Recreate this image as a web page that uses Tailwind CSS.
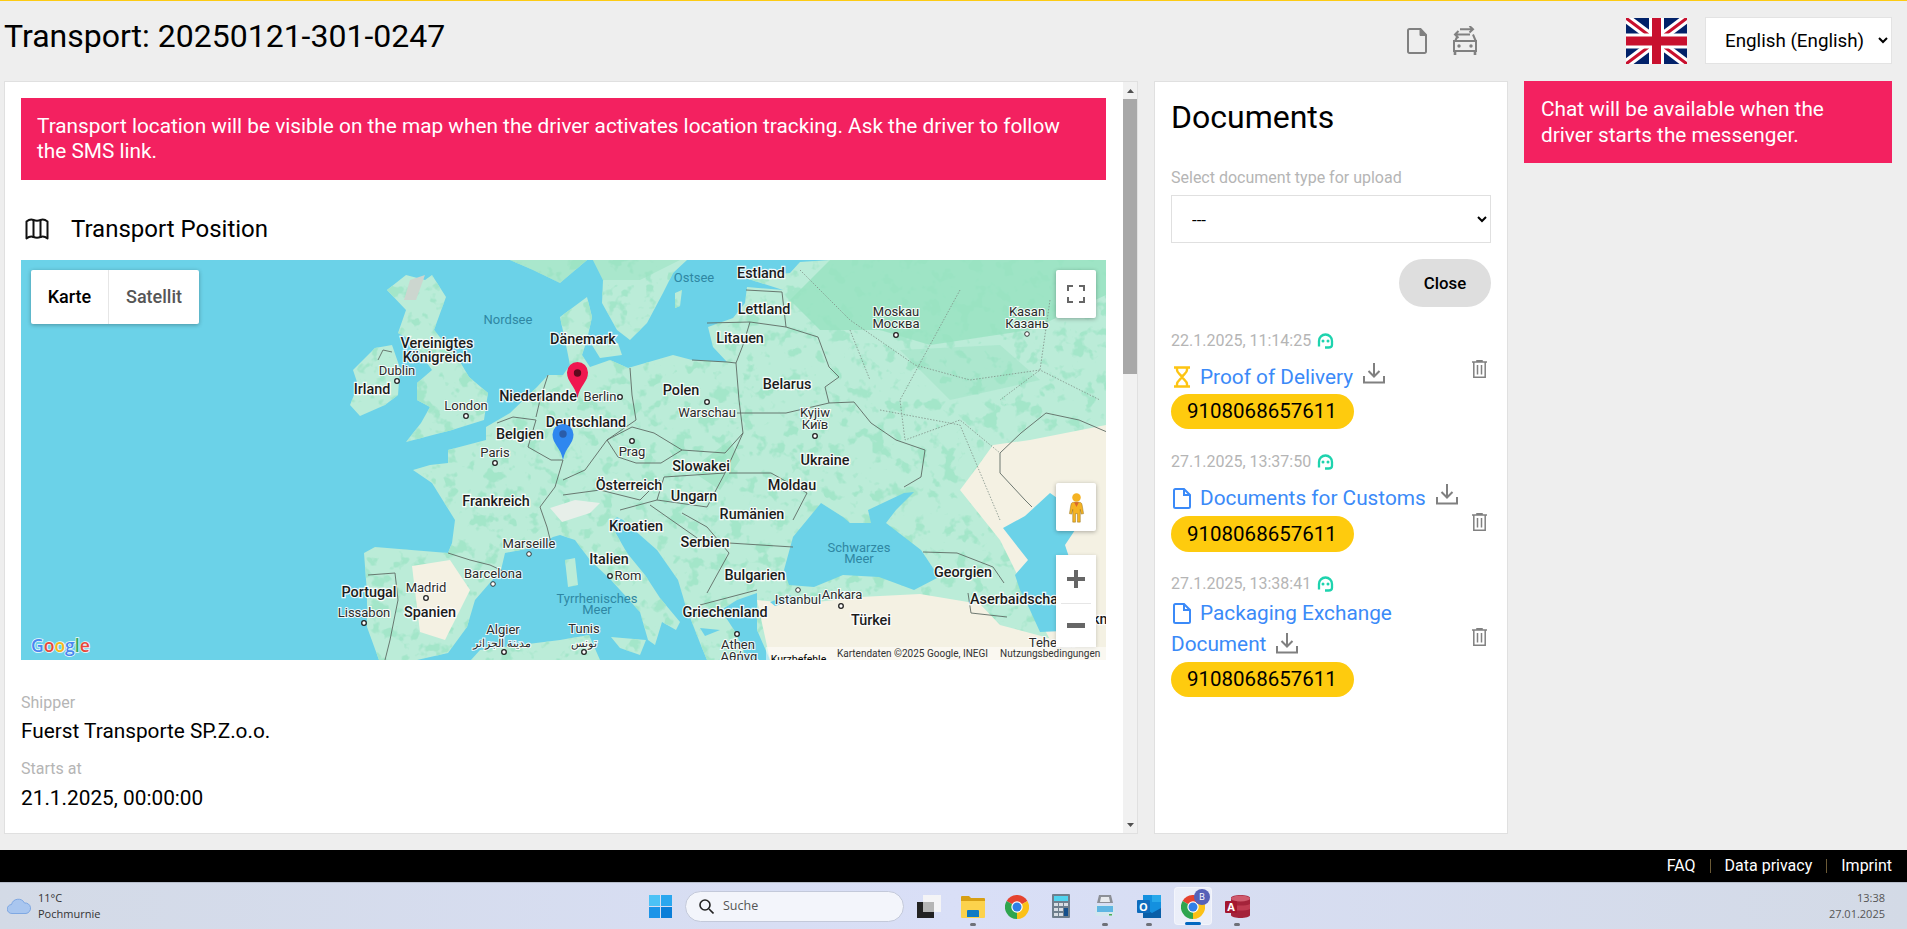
<!DOCTYPE html>
<html lang="en">
<head>
<meta charset="utf-8">
<title>Transport</title>
<script src="https://cdn.jsdelivr.net/npm/@tailwindcss/browser@4"></script>
</head>
<body class="[font-family:Roboto,sans-serif]">
<div class="w-[1907px] h-[929px] bg-[#eeeeee] overflow-hidden flex flex-col border-t border-[#fdcb12] text-black">

  <header class="h-[80px] flex items-start pl-[4px] pr-[15px] shrink-0">
    <h1 class="w-[1403px] text-[32px] leading-[38px] mt-[16px] font-normal">Transport: 20250121-301-0247</h1>
    <svg class="w-[20px] h-[26px] mt-[27px]" viewBox="0 0 20 26" fill="none" stroke="#808080" stroke-width="2"><path d="M2.500 1h11l5.500 6v16.500a1.500 1.500 0 0 1-1.500 1.500h-15A1.500 1.500 0 0 1 1 23.500V2.500A1.500 1.500 0 0 1 2.500 1z"/><path d="M13 1v6.500h6z" fill="#808080" stroke-width="1"/></svg>
    <svg class="w-[24px] h-[29px] ml-[26px] mt-[25px]" viewBox="0 0 24 29" fill="none" stroke="#808080" stroke-width="2"><path d="M7 3.300h13M16.500 0l3.500 3.300-3.500 3.300"/><path d="M17 8.500H2M5.500 5l-3.500 3.500L5.500 12" /><path d="M4 11l-2 4.500M20 8.500l2.500 6"/><path d="M1 15h22v10H1z"/><path d="M2 25v4M22 25v4" stroke-width="2.600"/><circle cx="6" cy="20" r="1.700" fill="#808080" stroke="none"/><circle cx="18" cy="20" r="1.700" fill="#808080" stroke="none"/></svg>
    <svg class="w-[61px] h-[46px] ml-[149px] mt-[17px]" viewBox="0 0 61 46"><rect width="61" height="46" fill="#012169"/><path d="M0 0L61 46M61 0L0 46" stroke="#fff" stroke-width="9"/><path d="M0 0L61 46M61 0L0 46" stroke="#c8102e" stroke-width="3"/><path d="M30.500 0V46M0 23H61" stroke="#fff" stroke-width="15"/><path d="M30.500 0V46M0 23H61" stroke="#c8102e" stroke-width="9"/></svg>
    <select class="w-[187px] h-[47px] ml-[18px] mt-[16px] bg-white border border-[#e3e3e3] pl-[15px] text-[18.800px] appearance-auto"><option>English (English)</option></select>
  </header>

  <main class="h-[753px] flex pl-[4px] shrink-0">
    <!-- left card -->
    <section class="w-[1134px] h-full bg-white border border-[#e0e0e0] flex overflow-hidden">
      <div class="flex-1 pl-[16px] pr-[17px] pt-[16px] overflow-hidden">
        <div class="h-[82px] bg-[#f32160] text-white text-[20.800px] leading-[25px] py-[16px] pl-[16px] pr-[24px]">Transport location will be visible on the map when the driver activates location tracking. Ask the driver to follow the SMS link.</div>
        <div class="flex items-center h-[30px] mt-[34px]">
          <svg class="w-[24px] h-[24px] ml-[4px]" viewBox="0 0 24 24" fill="none" stroke="#111" stroke-width="2" stroke-linejoin="round"><path d="M1.500 4.500C4 2.500 6 2 8.500 3c2.500 1 4.500 1 7 0 2.500-1 4.500-.5 7 1.500v17c-2.500-2-4.500-2.500-7-1.500-2.500 1-4.500 1-7 0-2.500-1-4.500-.5-7 1.500z"/><path d="M8.500 3v18M15.500 3v18"/></svg>
          <span class="ml-[22px] text-[24px] leading-[30px]">Transport Position</span>
        </div>
        <!-- map -->
        <div class="relative w-[1085px] h-[400px] mt-[16px] bg-[#6bd2e8] overflow-hidden">
          <svg class="absolute inset-0 w-[1085px] h-[400px]" viewBox="21 260 1085 400">
            <defs>
              <path id="land" d="M379 660L367 627 367 593 364 553 375 547 448 553 452 543 455 520 432 483 413 470 430 465 448 463 448 450 486 440 486 427 510 413 537 387 548 375 563 375 570 365 567 350 560 317 587 297 592 317 587 340 582 355 590 367 610 360 628 368 673 355 692 360 727 362 713 347 708 327 733 318 745 303 747 287 783 290 745 278 790 273 800 262 830 260 1106 260 1106 660 770 660 757 630 757 593 737 600 721 610 736 633 745 655 735 660 707 660 700 643 686 607 678 580 657 550 623 520 617 517 610 523 627 553 645 575 660 598 680 622 676 630 662 622 655 645 648 640 640 612 611 580 590 560 575 540 560 535 553 537 536 547 505 553 501 570 475 600 467 627 448 653 417 660ZM533 270L560 283 587 260 593 260 603 280 602 303 617 330 630 340 647 323 663 293 673 273 687 260 510 260ZM432 275L446 297 434 330 459 360 469 377 488 393 484 420 452 430 406 442 421 423 430 407 417 400 417 383 432 370 411 340 398 333 406 310 387 290 406 275 425 280ZM353 370L375 348 392 345 400 368 398 395 385 405 360 416 350 405 358 385ZM471 660L480 650 560 640 589 635 600 660ZM611 637L646 640 640 655 620 648ZM565 560L575 558 578 585 568 587ZM592 345L618 343 622 355 600 358ZM675 293L682 290 680 306 675 308ZM720 630L700 628 705 636Z"/>
              <clipPath id="landclip"><use href="#land"/></clipPath>
              <filter id="mottle" x="0" y="0" width="100%" height="100%" color-interpolation-filters="sRGB"><feTurbulence type="fractalNoise" baseFrequency=".07" numOctaves="3" seed="7"/><feColorMatrix values="0 0 0 0 .64  0 0 0 0 .9  0 0 0 0 .79  9 0 0 0 -5"/></filter>
            </defs>
            <use href="#land" fill="#bbecd8"/>
            <rect x="21" y="260" width="1085" height="400" filter="url(#mottle)" clip-path="url(#landclip)"/>
            <g fill="#97e2c0">
              <path d="M830 260H1106V295L1030 330 930 345 880 330 820 330 790 300Z" opacity=".8"/>
              <path d="M533 270L560 283 587 260 593 260 603 280 640 280 680 260 510 260Z" opacity=".5"/>
              <path d="M690 470L730 440 740 460 720 490Z" opacity=".6"/>
              <path d="M900 350L1000 345 1040 380 950 400Z" opacity=".4"/>
            </g>
            <g fill="#f4f1e3">
              <path d="M993 445L1030 440 1106 425 1106 640 1050 640 1000 540 960 490 975 470Z"/>
              <path d="M757 600L800 604 860 597 920 594 980 604 1000 625 1056 640 1106 630 1106 660 770 660Z"/>
              <path d="M412 566L450 560 470 590 445 640 420 632Z"/>
              <path d="M410 280L425 275 416 300 404 300Z" fill="#ccd6cf"/>
              <path d="M550 508L575 500 600 503 590 513 562 522Z" fill="#e7efe9"/>
            </g>
            <g fill="#6bd2e8">
              <path d="M784 570L793 537 821 503 843 517 850 523 871 523 868 510 904 493 914 492 896 510 886 523 921 550 939 577 914 590 879 577 843 575 814 587 789 585Z"/>
              <path d="M1003 528L1025 516 1050 493 1060 500 1075 530 1065 545 1075 575 1095 615 1085 630 1040 632 1030 610 1020 590 1015 575 1028 560Z"/>
              <path d="M770 602L790 595 795 600 775 606Z"/>
            </g>
            <g fill="none" stroke="#5f6b64" stroke-width=".9">
              <path d="M378 360L383 350 392 352"/>
              <path d="M448 553L470 560 490 565 505 572"/>
              <path d="M368 575L395 573 398 600 390 640 385 660"/>
              <path d="M497 423L513 417 536 420 528 447 551 460 563 460 555 487 540 507 547 527 551 543"/>
              <path d="M548 375L540 400 536 417"/>
              <path d="M630 368L632 395 636 420 607 440 632 427 654 433 682 450 661 463 636 463 618 457 607 440 585 470 563 480"/>
              <path d="M736 363L739 400 743 433 725 453 682 450"/>
              <path d="M737 413L786 413 829 403 854 402 871 423 896 440 925 450 921 477 904 487"/>
              <path d="M707 323L750 322 786 327 818 337 829 367 839 377 825 387 829 403"/>
              <path d="M692 360L727 362 736 363M746 290L782 292 786 327M750 322L743 345 736 363"/>
              <path d="M729 473L771 473 807 493 793 520M729 543L793 547"/>
              <path d="M664 477L725 473 707 507 657 500 664 477M725 473L743 433"/>
              <path d="M682 513L707 527 729 553 707 593M650 505L700 540"/>
              <path d="M563 495L600 490 640 500 660 480M620 510L657 500"/>
              <path d="M923 552L957 553 993 567 1004 583"/>
              <path d="M1046 413L1079 420 1107 432M1046 413L1021 433 1000 453 1000 473 1025 500 1032 507"/>
              <path d="M968 593L971 613 1007 617M700 605L757 590"/>
            </g>
            <g fill="none" stroke="#7f8f86" stroke-width=".8" stroke-dasharray="1.500 1.500">
              <path d="M800 270L850 320 915 365 970 380 1040 370 1100 400"/>
              <path d="M960 290L930 345 900 400 905 440 960 420 1000 453"/>
              <path d="M1050 300L1040 370 1000 400"/>
              <path d="M880 410L960 425 1000 520M850 330L870 380"/>
            </g>
            <g fill="#2f87a3" font-size="13" text-anchor="middle">
              <text x="508" y="324">Nordsee</text><text x="694" y="282">Ostsee</text><text x="859" y="552">Schwarzes</text><text x="859" y="563">Meer</text><text x="597" y="603">Tyrrhenisches</text><text x="597" y="614">Meer</text>
            </g>
            <g fill="#1c1c1c" font-size="14.400" font-weight="500" text-anchor="middle" stroke="#fff" stroke-width="2.400" paint-order="stroke" stroke-opacity=".9">
              <text x="437" y="348">Vereinigtes</text><text x="437" y="362">Königreich</text><text x="372" y="394">Irland</text><text x="583" y="344">Dänemark</text><text x="538" y="401">Niederlande</text><text x="586" y="427">Deutschland</text><text x="520" y="439">Belgien</text><text x="496" y="506">Frankreich</text><text x="369" y="597">Portugal</text><text x="430" y="617">Spanien</text><text x="629" y="490">Österreich</text><text x="681" y="395">Polen</text><text x="761" y="278">Estland</text><text x="764" y="314">Lettland</text><text x="740" y="343">Litauen</text><text x="787" y="389">Belarus</text><text x="825" y="465">Ukraine</text><text x="701" y="471">Slowakei</text><text x="694" y="501">Ungarn</text><text x="792" y="490">Moldau</text><text x="752" y="519">Rumänien</text><text x="636" y="531">Kroatien</text><text x="705" y="547">Serbien</text><text x="755" y="580">Bulgarien</text><text x="725" y="617">Griechenland</text><text x="609" y="564">Italien</text><text x="871" y="625">Türkei</text><text x="963" y="577">Georgien</text><text x="1018" y="604">Aserbaidschan</text><text x="1115" y="624">Türkmenistan</text>
            </g>
            <g fill="#2b2b2b" font-size="13" text-anchor="middle" stroke="#fff" stroke-width="2.200" paint-order="stroke" stroke-opacity=".85">
              <text x="397" y="375">Dublin</text><text x="466" y="410">London</text><text x="495" y="457">Paris</text><text x="600" y="401">Berlin</text><text x="707" y="417">Warschau</text><text x="815" y="417">Kyjiw</text><text x="815" y="429">Київ</text><text x="896" y="316">Moskau</text><text x="896" y="328">Москва</text><text x="1027" y="316">Kasan</text><text x="1027" y="328">Казань</text><text x="632" y="456">Prag</text><text x="529" y="548">Marseille</text><text x="493" y="578">Barcelona</text><text x="426" y="592">Madrid</text><text x="364" y="617">Lissabon</text><text x="503" y="634">Algier</text><text x="502" y="647" font-family="'Noto Sans',sans-serif" font-size="11">مدينة الجزائر</text><text x="584" y="633">Tunis</text><text x="584" y="647" font-family="'Noto Sans',sans-serif" font-size="11">تونس</text><text x="628" y="580">Rom</text><text x="798" y="604">Istanbul</text><text x="842" y="599">Ankara</text><text x="738" y="649">Athen</text><text x="739" y="661">Αθήνα</text><text x="1052" y="647">Teheran</text>
            </g>
            <g fill="#fff" stroke="#222" stroke-width="1.300">
              <circle cx="397" cy="381" r="2.300"/><circle cx="466" cy="416" r="2.300"/><circle cx="495" cy="463" r="2.300"/><circle cx="620" cy="397" r="2.300"/><circle cx="707" cy="402" r="2.300"/><circle cx="815" cy="436" r="2.300"/><circle cx="896" cy="335" r="2.300"/><circle cx="632" cy="441" r="2.300"/><circle cx="426" cy="598" r="2.300"/><circle cx="364" cy="623" r="2.300"/><circle cx="504" cy="652" r="2.300"/><circle cx="584" cy="652" r="2.300"/><circle cx="610" cy="576" r="2.300"/><circle cx="841" cy="606" r="2.300"/><circle cx="737" cy="634" r="2.300"/><circle cx="1027" cy="334" r="2.300" stroke-width=".9"/><circle cx="529" cy="554" r="2.300" stroke-width=".9"/><circle cx="493" cy="584" r="2.300" stroke-width=".9"/><circle cx="798" cy="590" r="2.300" stroke-width=".9"/>
            </g>
            <path d="M577.500 398C575 385 567 382 567 372.500a10.500 10.500 0 0 1 21 0C588 382 580 385 577.500 398Z" fill="#f0174f"/><circle cx="577.500" cy="373" r="3.700" fill="#5e0a1d"/>
            <path d="M563 460C560.500 447 552.500 444 552.500 434.500a10.500 10.500 0 0 1 21 0C573.500 444 565.500 447 563 460Z" fill="#2f87ef"/><circle cx="563" cy="434" r="3.700" fill="#2a5ca8"/>
            <text x="31" y="652" font-family="'Open Sans',sans-serif" font-size="17.500" font-weight="600" stroke="#fff" stroke-width="1.600" paint-order="stroke" stroke-opacity=".9"><tspan fill="#4a86f0">G</tspan><tspan fill="#e8483a">o</tspan><tspan fill="#f4b81c">o</tspan><tspan fill="#4a86f0">g</tspan><tspan fill="#2fa95c">l</tspan><tspan fill="#e8483a">e</tspan></text>
          </svg>

          <div class="absolute left-[10px] top-[10px] w-[168px] h-[54px] bg-white rounded-[2px] shadow-[0_1px_4px_rgba(0,0,0,.3)] flex text-[18px] leading-[54px] font-medium">
            <div class="w-[78px] text-center text-black border-r border-[#e6e6e6]">Karte</div>
            <div class="flex-1 text-center text-[#565656]">Satellit</div>
          </div>

          <div class="absolute left-[1035px] top-[10px] w-[40px] h-[48px] bg-white rounded-[2px] shadow-[0_1px_4px_rgba(0,0,0,.3)] flex items-center justify-center">
            <svg class="w-[18px] h-[18px]" viewBox="0 0 18 18" fill="none" stroke="#666" stroke-width="2"><path d="M1 6V1h5M12 1h5v5M17 12v5h-5M6 17H1v-5"/></svg>
          </div>

          <div class="absolute left-[1035px] top-[223px] w-[40px] h-[48px] bg-white rounded-[2px] shadow-[0_1px_4px_rgba(0,0,0,.3)] flex items-center justify-center">
            <svg class="w-[17px] h-[31px]" viewBox="0 0 18 31"><circle cx="9" cy="5" r="4.500" fill="#f5b323"/><path d="M6 10h6c2 0 2.500 1 3 3l1.500 9-2.500.5-1-5V31h-3v-9h-2v9H5V17.500l-1 5-2.500-.5L3 13c.5-2 1-3 3-3z" fill="#f5b323" stroke="#8f6f22" stroke-width=".5"/><path d="M6.500 10l2.500 5 2.500-5z" fill="#d9682a"/></svg>
          </div>

          <div class="absolute left-[1035px] top-[295px] w-[40px] h-[92px] bg-white flex flex-col items-center shadow-[0_1px_4px_rgba(0,0,0,.2)]">
            <div class="h-[48px] flex items-center justify-center"><svg class="w-[18px] h-[18px]" viewBox="0 0 18 18"><path d="M7 0h4v7h7v4h-7v7H7v-7H0V7h7z" fill="#666"/></svg></div>
            <div class="w-[30px] border-t border-[#e6e6e6]"></div>
            <div class="h-[43px] flex items-center justify-center"><svg class="w-[18px] h-[5px]" viewBox="0 0 18 5"><rect width="18" height="5" fill="#666"/></svg></div>
          </div>

          <div class="absolute right-0 bottom-0 h-[13px] flex text-[10px] leading-[13px] text-[#333]">
            <div class="w-[65px] bg-white/50 text-center text-black text-[10.500px] overflow-hidden leading-[26px]">Kurzbefehle</div>
            <div class="w-[275px] bg-white/50 pl-[6px] flex gap-[12px] whitespace-nowrap"><span>Kartendaten ©2025 Google, INEGI</span><span>Nutzungsbedingungen</span></div>
          </div>
        </div>

        <div class="text-[16px] leading-[22px] text-[#b5b5b5] mt-[32px]">Shipper</div>
        <div class="text-[20.800px] leading-[26px] mt-[4px]">Fuerst Transporte SP.Z.o.o.</div>
        <div class="text-[16px] leading-[22px] text-[#b5b5b5] mt-[14px]">Starts at</div>
        <div class="text-[20.800px] leading-[26px] mt-[5px]">21.1.2025, 00:00:00</div>
      </div>
      <div class="w-[14px] bg-[#f1f1f1] flex flex-col items-stretch shrink-0">
        <div class="h-[17px] flex items-center justify-center"><svg class="w-[7px] h-[4px]" viewBox="0 0 7 4"><path d="M3.500 0L7 4H0z" fill="#505050"/></svg></div>
        <div class="h-[275px] bg-[#a8a8a8]"></div>
        <div class="flex-1"></div>
        <div class="h-[17px] flex items-center justify-center"><svg class="w-[7px] h-[4px]" viewBox="0 0 7 4"><path d="M0 0H7L3.500 4z" fill="#505050"/></svg></div>
      </div>
    </section>

    <!-- documents card -->
    <section class="w-[354px] h-full ml-[16px] bg-white border border-[#e0e0e0] px-[16px] pt-[16px]">
      <h2 class="text-[32px] leading-[38px] font-normal">Documents</h2>
      <div class="text-[16px] leading-[22px] text-[#b5b5b5] mt-[31px]">Select document type for upload</div>
      <select class="w-full h-[48px] mt-[6px] bg-white border border-[#e0e0e0] pl-[16px] pt-[2px] text-[16.800px] appearance-auto"><option>---</option></select>
      <div class="flex justify-end mt-[16px]"><button class="w-[92px] h-[48px] pt-[1px] rounded-full bg-[#dedede] text-[16.800px] font-medium">Close</button></div>

      <!-- row 1 -->
      <div class="flex mt-[23px]">
        <div class="flex-1">
          <div class="flex items-center text-[16px] leading-[22px] text-[#b5b5b5]">22.1.2025, 11:14:25
            <svg class="w-[17px] h-[16px] ml-[6px]" viewBox="0 0 17 16" fill="none" stroke="#1ed3ae" stroke-width="2.300"><path d="M2 13.500V8a6.500 6.500 0 0 1 13 0v4q0 2.500-3.500 2.500H8"/><circle cx="6" cy="8" r="1.500" fill="#1ed3ae" stroke="none"/><circle cx="11" cy="8" r="1.500" fill="#1ed3ae" stroke="none"/></svg>
          </div>
          <div class="flex items-center h-[26px] mt-[12px] text-[20.800px] leading-[26px] text-[#3b8af8]">
            <svg class="w-[18px] h-[22px] ml-[2px] mr-[9px]" viewBox="0 0 18 22" fill="none" stroke="#fdc412" stroke-width="2.400"><path d="M1 1.500h16M1 20.500h16"/><path d="M4 2v2c0 3 3 4 5 7 2-3 5-4 5-7V2M4 20v-2c0-3 3-4 5-7 2 3 5 4 5 7v2"/></svg>
            <span>Proof of Delivery</span>
            <svg class="w-[22px] h-[22px] ml-[10px] -mt-[8px]" viewBox="0 0 22 22" fill="none" stroke="#808080" stroke-width="2"><path d="M11 1v13M5.500 9l5.500 5.500L16.500 9M1 14v6.500h20V14"/></svg>
          </div>
          <div class="w-[183px] h-[35px] mt-[4px] rounded-full bg-[#fecb0e] pl-[16px] text-[20.500px] leading-[35px]">9108068657611</div>
        </div>
        <svg class="w-[15px] h-[18px] mr-[4px] mt-[30px]" viewBox="0 0 15 18" fill="none" stroke="#808080" stroke-width="1.500"><path d="M0 2h15M5 2V.8h5V2M1.800 2v15.200h11.400V2M5.500 5v9.500M9.500 5v9.500"/></svg>
      </div>

      <!-- row 2 -->
      <div class="flex mt-[22px]">
        <div class="flex-1">
          <div class="flex items-center text-[16px] leading-[22px] text-[#b5b5b5]">27.1.2025, 13:37:50
            <svg class="w-[17px] h-[16px] ml-[6px]" viewBox="0 0 17 16" fill="none" stroke="#1ed3ae" stroke-width="2.300"><path d="M2 13.500V8a6.500 6.500 0 0 1 13 0v4q0 2.500-3.500 2.500H8"/><circle cx="6" cy="8" r="1.500" fill="#1ed3ae" stroke="none"/><circle cx="11" cy="8" r="1.500" fill="#1ed3ae" stroke="none"/></svg>
          </div>
          <div class="flex items-center h-[26px] mt-[12px] text-[20.800px] leading-[26px] text-[#3b8af8] whitespace-nowrap">
            <svg class="w-[18px] h-[21px] ml-[2px] mr-[9px]" viewBox="0 0 18 21" fill="none" stroke="#3b8af8" stroke-width="2"><path d="M2.500 1h8.500l6 6v11.500a1.500 1.500 0 0 1-1.500 1.500h-13A1.500 1.500 0 0 1 1 18.500v-16A1.500 1.500 0 0 1 2.500 1z"/><path d="M11 1v6h6"/></svg>
            <span>Documents for Customs</span>
            <svg class="w-[22px] h-[22px] ml-[10px] -mt-[8px]" viewBox="0 0 22 22" fill="none" stroke="#808080" stroke-width="2"><path d="M11 1v13M5.500 9l5.500 5.500L16.500 9M1 14v6.500h20V14"/></svg>
          </div>
          <div class="w-[183px] h-[36px] mt-[5px] rounded-full bg-[#fecb0e] pl-[16px] text-[20.500px] leading-[36px]">9108068657611</div>
        </div>
        <svg class="w-[15px] h-[18px] mr-[4px] mt-[62px]" viewBox="0 0 15 18" fill="none" stroke="#808080" stroke-width="1.500"><path d="M0 2h15M5 2V.8h5V2M1.800 2v15.200h11.400V2M5.500 5v9.500M9.500 5v9.500"/></svg>
      </div>

      <!-- row 3 -->
      <div class="flex mt-[21px]">
        <div class="flex-1">
          <div class="flex items-center text-[16px] leading-[22px] text-[#b5b5b5]">27.1.2025, 13:38:41
            <svg class="w-[17px] h-[16px] ml-[6px]" viewBox="0 0 17 16" fill="none" stroke="#1ed3ae" stroke-width="2.300"><path d="M2 13.500V8a6.500 6.500 0 0 1 13 0v4q0 2.500-3.500 2.500H8"/><circle cx="6" cy="8" r="1.500" fill="#1ed3ae" stroke="none"/><circle cx="11" cy="8" r="1.500" fill="#1ed3ae" stroke="none"/></svg>
          </div>
          <div class="flex items-center h-[26px] mt-[5px] text-[20.800px] leading-[26px] text-[#3b8af8]">
            <svg class="w-[18px] h-[21px] ml-[2px] mr-[9px]" viewBox="0 0 18 21" fill="none" stroke="#3b8af8" stroke-width="2"><path d="M2.500 1h8.500l6 6v11.500a1.500 1.500 0 0 1-1.500 1.500h-13A1.500 1.500 0 0 1 1 18.500v-16A1.500 1.500 0 0 1 2.500 1z"/><path d="M11 1v6h6"/></svg>
            <span>Packaging Exchange</span>
          </div>
          <div class="flex items-center h-[26px] mt-[5px] text-[20.800px] leading-[26px] text-[#3b8af8]">
            <span>Document</span>
            <svg class="w-[22px] h-[22px] ml-[10px] -mt-[2px]" viewBox="0 0 22 22" fill="none" stroke="#808080" stroke-width="2"><path d="M11 1v13M5.500 9l5.500 5.500L16.500 9M1 14v6.500h20V14"/></svg>
          </div>
          <div class="w-[183px] h-[35px] mt-[5px] rounded-full bg-[#fecb0e] pl-[16px] text-[20.500px] leading-[35px]">9108068657611</div>
        </div>
        <svg class="w-[15px] h-[18px] mr-[4px] mt-[55px]" viewBox="0 0 15 18" fill="none" stroke="#808080" stroke-width="1.500"><path d="M0 2h15M5 2V.8h5V2M1.800 2v15.200h11.400V2M5.500 5v9.500M9.500 5v9.500"/></svg>
      </div>
    </section>

    <!-- chat -->
    <aside class="w-[368px] h-[82px] ml-[16px] bg-[#f32160] text-white text-[20.800px] leading-[26px] pl-[17px] pr-[24px] py-[15px]">Chat will be available when the driver starts the messenger.</aside>
  </main>

  <footer class="h-[32px] mt-[16px] bg-black text-white text-[16px] leading-[32px] flex justify-end items-center pr-[15px] shrink-0">
    <span>FAQ</span><span class="w-px h-[14px] bg-[#6b5a36] mx-[14px]"></span><span>Data privacy</span><span class="w-px h-[14px] bg-[#6b5a36] mx-[14px]"></span><span>Imprint</span>
  </footer>

  <!-- windows taskbar -->
  <div class="relative h-[47px] shrink-0 border-t border-[#b6bdca] bg-linear-to-r from-[#d3dae6] via-[#d9dff7] to-[#d3dae6] [font-family:'Open_Sans',sans-serif] text-[11px] text-[#333]">
    <svg class="absolute left-[7px] top-[14px] w-[24px] h-[17px]" viewBox="0 0 24 17"><path d="M5 16.500a4.500 4.500 0 0 1-.5-9A7 7 0 0 1 17.500 6 5.300 5.300 0 0 1 19 16.500z" fill="#a9c6ef" stroke="#6f9ddf" stroke-width=".8"/></svg>
    <div class="absolute left-[38px] top-[7px] leading-[16px]">11°C<br>Pochmurnie</div>

    <svg class="absolute left-[649px] top-[12px] w-[23px] h-[23px]" viewBox="0 0 23 23"><rect width="11" height="11" fill="#4cc2f6"/><rect x="12" width="11" height="11" fill="#2aa7ef"/><rect y="12" width="11" height="11" fill="#1c94e8"/><rect x="12" y="12" width="11" height="11" fill="#0a7ed8"/></svg>

    <div class="absolute left-[685px] top-[8px] w-[219px] h-[31px] rounded-full bg-[#f3f5fb] border border-[#c3c9da] flex items-center pl-[13px] text-[12.500px] text-[#555]">
      <svg class="w-[15px] h-[15px] mr-[9px]" viewBox="0 0 15 15" fill="none" stroke="#222" stroke-width="1.600"><circle cx="6" cy="6" r="5"/><path d="M10 10l4.500 4.500"/></svg>Suche
    </div>

    <svg class="absolute left-[917px] top-[12px] w-[24px] h-[23px]" viewBox="0 0 24 23"><rect x="6" width="18" height="17" fill="#f4f4f6"/><rect y="7" width="17" height="16" fill="#222"/><rect x="6" y="7" width="11" height="10" fill="#b5b5b5"/></svg>

    <svg class="absolute left-[961px] top-[12px] w-[24px] h-[23px]" viewBox="0 0 24 23"><path d="M0 2a1 1 0 0 1 1-1h7l2 2h13a1 1 0 0 1 1 1v18H0z" fill="#d79f14"/><path d="M0 6h24v16a1 1 0 0 1-1 1H1a1 1 0 0 1-1-1z" fill="#fcd24c"/><path d="M6 16a1 1 0 0 1 1-1h10a1 1 0 0 1 1 1v6H6z" fill="#0e7ac4"/></svg>
    <div class="absolute left-[970px] top-[40px] w-[6px] h-[3px] rounded-full bg-[#6e7078]"></div>

    <svg class="absolute left-[1005px] top-[12px] w-[24px] h-[24px]" viewBox="0 0 24 24"><path d="M12 12L22.400 6A12 12 0 0 0 1.600 6Z" fill="#e5432f"/><path d="M12 12L1.600 6A12 12 0 0 0 12 24Z" fill="#2fa54e"/><path d="M12 12L12 24A12 12 0 0 0 22.400 6Z" fill="#fbc117"/><circle cx="12" cy="12" r="5.700" fill="#fff"/><circle cx="12" cy="12" r="4.500" fill="#2f7fe6"/></svg>

    <svg class="absolute left-[1052px] top-[11px] w-[18px] h-[24px]" viewBox="0 0 18 24"><rect width="18" height="24" rx="1" fill="#6f7f8d"/><rect x="2" y="2" width="14" height="5" fill="#50d3ef"/><g fill="#d8dee4"><rect x="2" y="9" width="4" height="3"/><rect x="7" y="9" width="4" height="3"/><rect x="12" y="9" width="4" height="3"/><rect x="2" y="14" width="4" height="3"/><rect x="7" y="14" width="4" height="3"/><rect x="2" y="19" width="4" height="3"/><rect x="7" y="19" width="4" height="3"/></g><rect x="12" y="14" width="4" height="8" fill="#15508c"/></svg>

    <svg class="absolute left-[1095px] top-[11px] w-[20px] h-[24px]" viewBox="0 0 20 24"><path d="M4 1h12l2 8H2z" fill="#8c8f96"/><path d="M6 3h8l1 5H5z" fill="#e8eaed"/><path d="M1 11h18l1 9a2 2 0 0 1-2 2H2a2 2 0 0 1-2-2z" fill="#d4e6ee"/><rect x="2" y="12" width="16" height="6" fill="#5fb6e3"/><rect x="14" y="20" width="3" height="1.500" fill="#4cae58"/></svg>
    <div class="absolute left-[1102px] top-[40px] w-[6px] h-[3px] rounded-full bg-[#6e7078]"></div>

    <svg class="absolute left-[1137px] top-[12px] w-[24px] h-[23px]" viewBox="0 0 24 23"><rect x="6" width="18" height="23" fill="#1490df"/><path d="M6 13l9 5 9-5v10H6z" fill="#0a5fa8"/><rect x="15" y="0" width="9" height="7" fill="#28a8ea"/><rect y="5" width="13" height="13" rx="1" fill="#0f6cbd"/><text x="6.500" y="15.500" font-size="11" font-weight="700" fill="#fff" text-anchor="middle" font-family="'Open Sans',sans-serif">O</text></svg>
    <div class="absolute left-[1146px] top-[40px] w-[6px] h-[3px] rounded-full bg-[#6e7078]"></div>

    <div class="absolute left-[1174px] top-[4px] w-[38px] h-[38px] rounded-[4px] bg-white/50 border border-white/40"></div>
    <svg class="absolute left-[1181px] top-[12px] w-[24px] h-[24px]" viewBox="0 0 24 24"><path d="M12 12L22.400 6A12 12 0 0 0 1.600 6Z" fill="#e5432f"/><path d="M12 12L1.600 6A12 12 0 0 0 12 24Z" fill="#2fa54e"/><path d="M12 12L12 24A12 12 0 0 0 22.400 6Z" fill="#fbc117"/><circle cx="12" cy="12" r="5.700" fill="#fff"/><circle cx="12" cy="12" r="4.500" fill="#2f7fe6"/></svg>
    <div class="absolute left-[1194px] top-[6px] w-[16px] h-[16px] rounded-full bg-[#5661b8] text-white text-[9px] leading-[16px] text-center">B</div>
    <div class="absolute left-[1185px] top-[39px] w-[16px] h-[3px] rounded-full bg-[#0067c0]"></div>

    <svg class="absolute left-[1225px] top-[12px] w-[25px] h-[23px]" viewBox="0 0 25 23"><path d="M6 3c0-4 19-4 19 0v17c0 4-19 4-19 0z" fill="#a4233a"/><ellipse cx="15.500" cy="3.500" rx="9.500" ry="3" fill="#cf5a6d"/><path d="M6 9c4 2 15 2 19 0v5c-4 2-15 2-19 0z" fill="#bf3a50"/><rect y="6" width="12" height="12" rx="1" fill="#a4172f"/><text x="6" y="16" font-size="11" font-weight="700" fill="#fff" text-anchor="middle" font-family="'Open Sans',sans-serif">A</text></svg>
    <div class="absolute left-[1234px] top-[40px] w-[6px] h-[3px] rounded-full bg-[#6e7078]"></div>

    <div class="absolute right-[22px] top-[7px] leading-[16px] text-right text-[#555]">13:38<br>27.01.2025</div>
  </div>
</div>
</body>
</html>
